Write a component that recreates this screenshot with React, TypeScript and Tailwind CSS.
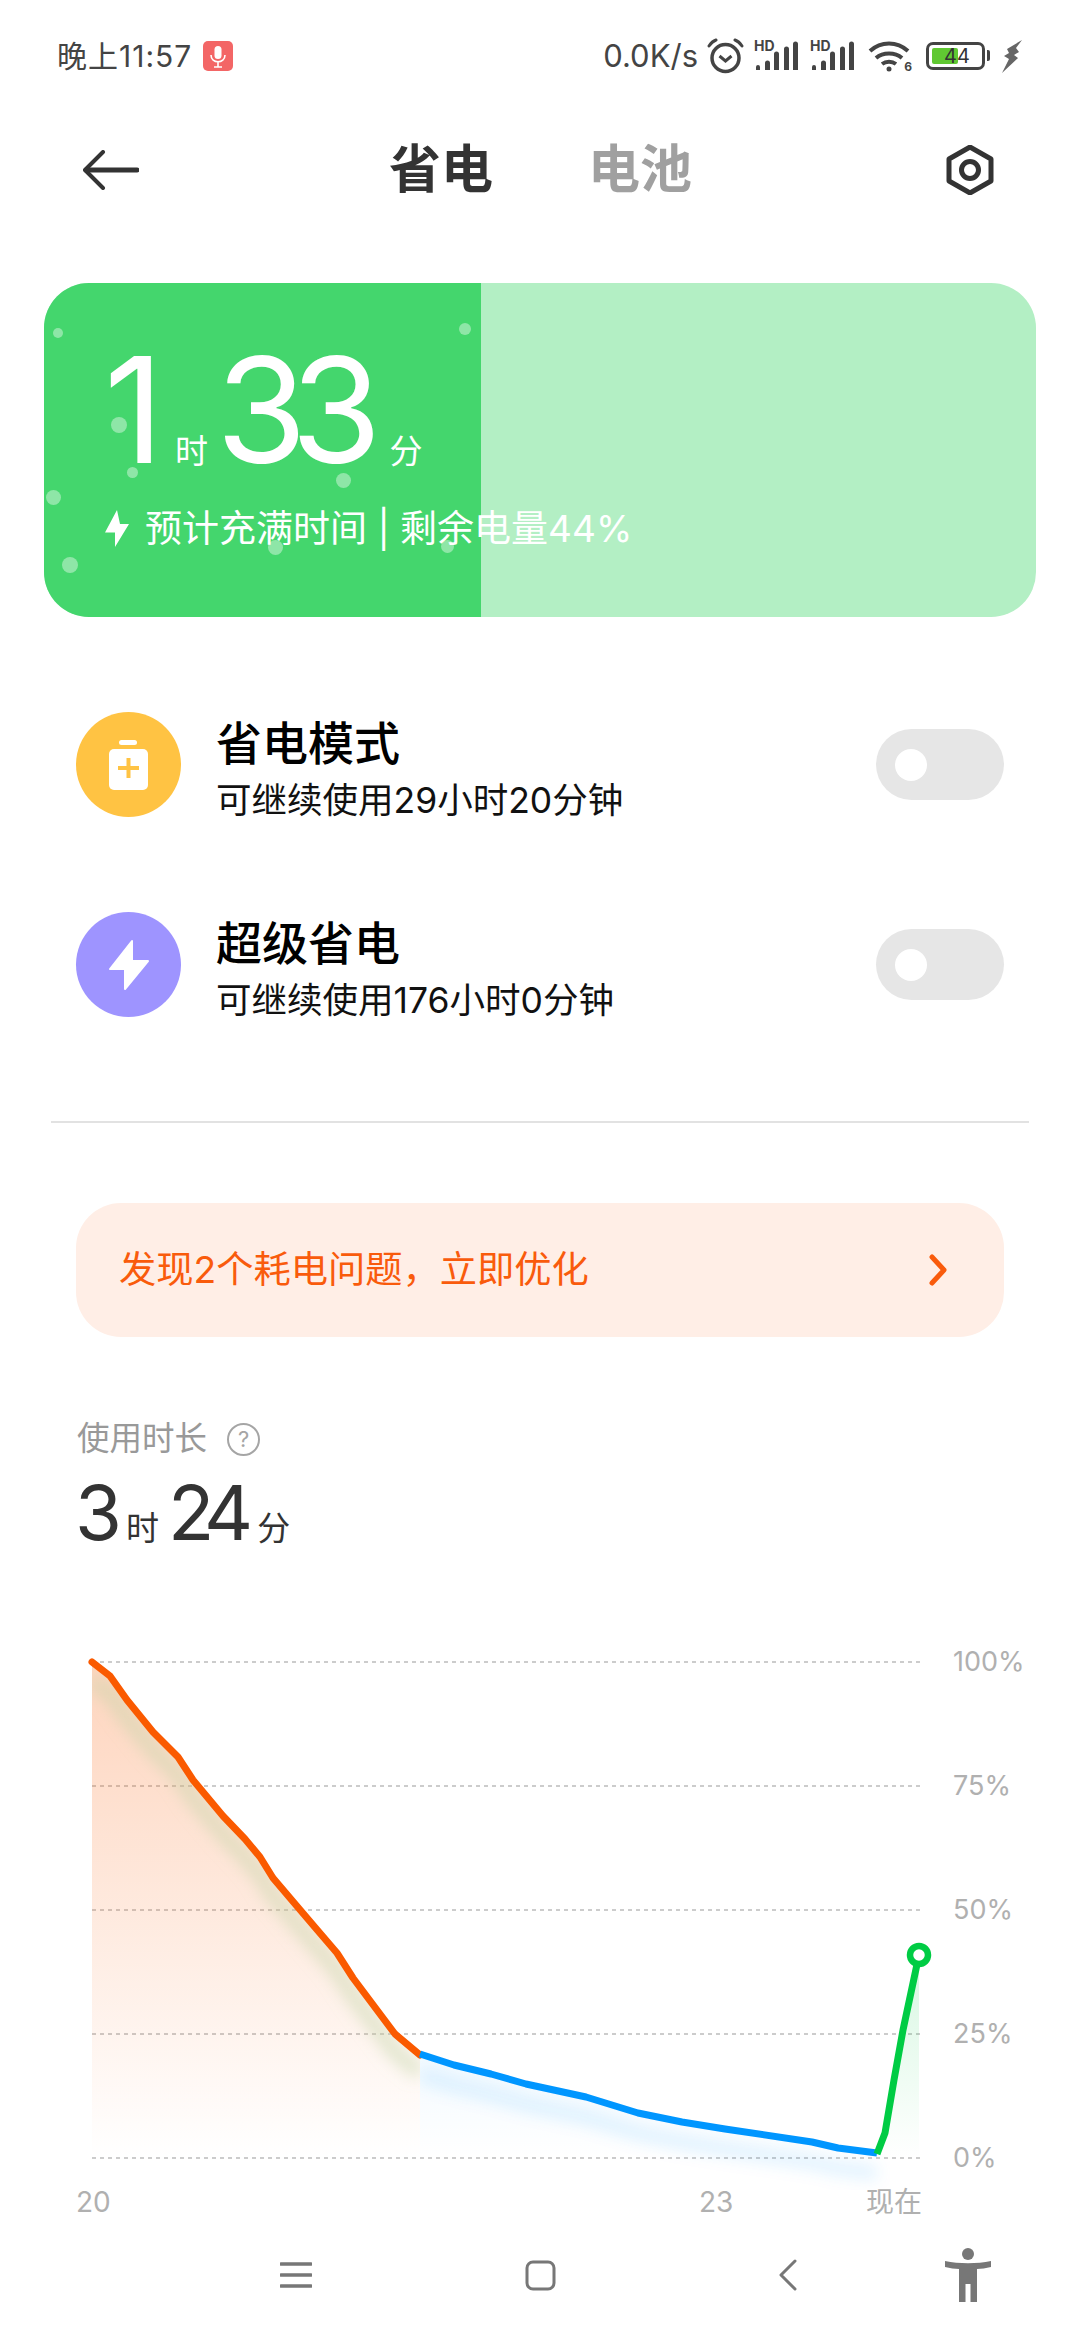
const orange =
  "92,1662 110,1676 127,1700 153,1732 178,1757 193,1780 223,1816 245,1839 260,1857 273,1878 290,1898 313,1925 337,1953 353,1978 395,2034 420,2055";
const blue =
  "420,2054 454,2065 491,2074 526,2084 586,2097 638,2113 682,2122 725,2129 812,2142 838,2148 877,2153";
const green = "877,2154 885,2133 894,2080 903,2030 919,1955";

const dots = [
  { c: "left-[9px] top-[45px] h-[10px] w-[10px]" },
  { c: "left-[415px] top-[40px] h-[12px] w-[12px]" },
  { c: "left-[67px] top-[134px] h-[16px] w-[16px]" },
  { c: "left-[83px] top-[184px] h-[11px] w-[11px]" },
  { c: "left-[292px] top-[190px] h-[15px] w-[15px]" },
  { c: "left-[2px] top-[207px] h-[15px] w-[15px]" },
  { c: "left-[224px] top-[257px] h-[15px] w-[15px]" },
  { c: "left-[397px] top-[257px] h-[13px] w-[13px]" },
  { c: "left-[18px] top-[274px] h-[16px] w-[16px]" },
];

function MicBadge() {
  return (
    <svg width="30" height="30" viewBox="0 0 30 30" className="ml-[11px]">
      <rect width="30" height="30" rx="5" fill="#f36666" />
      <rect x="11.500" y="5" width="7" height="13" rx="3.500" fill="#fff" />
      <path d="M8 14c0 9 14 9 14 0M15 20v6M11 26h8" fill="none" stroke="#fff" strokeWidth="1.600" />
    </svg>
  );
}

function Alarm() {
  return (
    <svg width="38" height="36" viewBox="0 0 38 36" className="ml-[9px]">
      <circle cx="18.500" cy="20" r="13.500" fill="none" stroke="#444" strokeWidth="3.500" />
      <path d="M12.500 18l6 5 6-5" fill="none" stroke="#444" strokeWidth="3" />
      <path d="M2 8C4 5 6 3 9 2M35 8c-2-3-4-5-7-6" fill="none" stroke="#444" strokeWidth="3" strokeLinecap="round" />
    </svg>
  );
}

function Signal({ className }: { className?: string }) {
  return (
    <div className={`relative h-[30px] w-[46px] ${className ?? ""}`}>
      <span className="absolute left-0 top-[-2px] text-[14px] font-bold leading-[14px] text-[#444]">HD</span>
      <svg width="46" height="30" viewBox="0 0 46 30">
        <path
          d="M2 29v-3a2 2 0 0 1 4 0v3zM11 29v-7a2 2 0 0 1 5 0v7zM20 29V13a2 2 0 0 1 5 0v16zM30 29V8a2 2 0 0 1 5 0v21zM39 29V3a2 2 0 0 1 5 0v26z"
          fill="#444"
        />
      </svg>
    </div>
  );
}

function Wifi() {
  return (
    <div className="relative ml-[12px] h-[32px] w-[44px]">
      <svg width="44" height="32" viewBox="0 0 44 32">
        <path d="M2 11c11-10 27-10 38 0M8 18c7-6 19-6 26 0M14 24c4-3 10-3 14 0" fill="none" stroke="#444" strokeWidth="4" />
        <circle cx="21" cy="29" r="2.500" fill="#444" />
      </svg>
      <span className="absolute right-0 top-[20px] text-[12px] font-bold leading-[13px] text-[#444]">6</span>
    </div>
  );
}

function Battery() {
  return (
    <div className="relative ml-[14px] flex h-[28px] w-[64px]">
      <div className="h-[28px] w-[59px] rounded-[7px] border-[3px] border-[#444] p-[3px]">
        <div className="h-full w-[26px] rounded-[2px] bg-[#60c832]" />
      </div>
      <div className="ml-[2px] mt-[8px] h-[11px] w-[3px] rounded-r-[2px] bg-[#444]" />
      <span className="absolute left-[18px] top-0 text-[20px] leading-[28px] text-[#333]">44</span>
    </div>
  );
}

function StatusBar() {
  return (
    <div className="flex h-[112px] items-center justify-between pl-[57px] pr-[58px] text-[#444]">
      <div className="flex items-center">
        <span className="text-[30px] leading-[40px] tracking-[1px]">晚上11:57</span>
        <MicBadge />
      </div>
      <div className="flex items-center">
        <span className="text-[31px] leading-[40px]">0.0K/s</span>
        <Alarm />
        <Signal className="ml-[9px]" />
        <Signal className="ml-[10px]" />
        <Wifi />
        <Battery />
        <svg width="20" height="33" viewBox="0 0 20 33" className="ml-[12px]">
          <path d="M20 0 5 9l2 4-5 3 5 3-7 14 16-15-4-3 5-3-3-4z" fill="#666" />
        </svg>
      </div>
    </div>
  );
}

function Header() {
  return (
    <div className="flex h-[116px] items-center justify-between pl-[83px] pr-[85px]">
      <svg width="56" height="40" viewBox="0 0 56 40">
        <path d="M20 2 2 20l18 18" fill="none" stroke="#333" strokeWidth="4" strokeLinecap="round" strokeLinejoin="round" />
        <path d="M3 20h51" fill="none" stroke="#333" strokeWidth="5" strokeLinecap="round" />
      </svg>
      <div className="mr-[3px] flex gap-[95px] text-[52px] font-bold leading-[60px]">
        <span className="text-[#333]">省电</span>
        <span className="text-[#a0a0a0]">电池</span>
      </div>
      <svg width="50" height="50" viewBox="0 0 50 50">
        <path d="M25 2 46 14v22L25 48 4 36V14z" fill="none" stroke="#333" strokeWidth="5" strokeLinejoin="round" />
        <circle cx="25" cy="25" r="8.500" fill="none" stroke="#333" strokeWidth="5" />
      </svg>
    </div>
  );
}

function HeroCard() {
  return (
    <div className="mx-[44px] mt-[55px] flex h-[334px] overflow-hidden rounded-[45px] bg-[#b3efc4]">
      <div className="relative h-full w-[437px] shrink-0 bg-[#44d66d] text-white">
        {dots.map((d, i) => (
          <div key={i} className={`absolute rounded-full bg-white/40 ${d.c}`} />
        ))}
        <div className="relative flex h-[150px] items-baseline whitespace-nowrap pl-[60px] pt-[52px]">
          <span className="w-[60px] text-[147px] font-normal leading-[150px] tracking-[-16px]">1</span>
          <span className="ml-[11px] text-[33px] leading-[40px]">时</span>
          <span className="ml-[8px] text-[147px] font-normal leading-[150px] tracking-[-16px]">33</span>
          <span className="ml-[24px] text-[33px] leading-[40px]">分</span>
        </div>
        <div className="relative mt-[72px] flex h-[48px] items-center whitespace-nowrap pl-[61px]">
          <svg width="24" height="38" viewBox="0 0 24 38" className="shrink-0">
            <path d="M12 0 0 22.500h10L10 37 24 14h-9z" fill="#fff" />
          </svg>
          <span className="ml-[16px] text-[37px] leading-[48px]">预计充满时间 | 剩余电量44%</span>
        </div>
      </div>
    </div>
  );
}

function Toggle() {
  return (
    <div className="flex h-[71px] w-[128px] items-center rounded-full bg-[#e6e6e6] pl-[19px]">
      <div className="h-[32px] w-[32px] rounded-full bg-white" />
    </div>
  );
}

function ModeRow({
  icon,
  color,
  title,
  sub,
  className,
}: {
  icon: React.ReactNode;
  color: string;
  title: string;
  sub: string;
  className?: string;
}) {
  return (
    <div className={`flex h-[105px] items-center pl-[76px] pr-[76px] ${className ?? ""}`}>
      <div className={`flex h-[105px] w-[105px] shrink-0 items-center justify-center rounded-full ${color}`}>{icon}</div>
      <div className="ml-[35px] flex-1 pt-[10px]">
        <div className="text-[46px] font-medium leading-[52px] text-black">{title}</div>
        <div className="mt-[10px] text-[35.500px] leading-[44px] text-[#111]">{sub}</div>
      </div>
      <Toggle />
    </div>
  );
}

function ChartLines() {
  const fillOrange = `${orange} 420,2158 92,2158`;
  const fillBlue = `${blue} 877,2158 420,2158`;
  const fillGreen = `${green} 919,2158 877,2158`;
  return (
    <svg width="840" height="540" viewBox="92 1640 840 540" className="overflow-visible">
      <defs>
        <linearGradient id="og" gradientUnits="userSpaceOnUse" x1="0" y1="1662" x2="0" y2="2158">
          <stop offset="0" stopColor="#fa5a00" stopOpacity="0.26" />
          <stop offset="1" stopColor="#fa5a00" stopOpacity="0" />
        </linearGradient>
        <linearGradient id="bg" gradientUnits="userSpaceOnUse" x1="0" y1="2054" x2="0" y2="2158">
          <stop offset="0" stopColor="#0096ff" stopOpacity="0.05" />
          <stop offset="1" stopColor="#0096ff" stopOpacity="0" />
        </linearGradient>
        <linearGradient id="gg" gradientUnits="userSpaceOnUse" x1="0" y1="1955" x2="0" y2="2158">
          <stop offset="0" stopColor="#00cc44" stopOpacity="0.16" />
          <stop offset="1" stopColor="#00cc44" stopOpacity="0" />
        </linearGradient>
        <filter id="soft" x="-10%" y="-30%" width="120%" height="160%">
          <feGaussianBlur stdDeviation="8" />
        </filter>
        <clipPath id="oc">
          <polygon points={fillOrange} />
        </clipPath>
        <clipPath id="bc">
          <rect x="420" y="2040" width="470" height="150" />
        </clipPath>
      </defs>
      {[1662, 1786, 1910, 2034, 2158].map((y) => (
        <line key={y} x1="92" x2="922" y1={y} y2={y} stroke="#bcbcbc" strokeWidth="1.500" strokeDasharray="4 4" />
      ))}
      <polygon points={fillOrange} fill="url(#og)" />
      <g clipPath="url(#oc)">
        <polyline points={orange} transform="translate(0 18)" fill="none" stroke="#c3d6a8" strokeOpacity="0.55" strokeWidth="14" filter="url(#soft)" />
      </g>
      <polygon points={fillBlue} fill="url(#bg)" />
      <g clipPath="url(#bc)">
        <polyline points={blue} transform="translate(0 20)" fill="none" stroke="#0096ff" strokeOpacity="0.12" strokeWidth="14" filter="url(#soft)" />
      </g>
      <polygon points={fillGreen} fill="url(#gg)" />
      <polyline points={orange} fill="none" stroke="#fa5a00" strokeWidth="7" strokeLinecap="round" strokeLinejoin="round" />
      <polyline points={blue} fill="none" stroke="#0096ff" strokeWidth="7" strokeLinejoin="round" />
      <polyline points={green} fill="none" stroke="#00cc44" strokeWidth="7" strokeLinejoin="round" />
      <circle cx="919" cy="1955" r="9" fill="#fff" stroke="#00cc44" strokeWidth="6.500" />
    </svg>
  );
}

function NavBar() {
  return (
    <div className="mt-[27px] flex h-[54px] items-center pl-[280px] text-[#777]">
      <svg width="32" height="28" viewBox="0 0 32 28">
        <path d="M1 3h30M1 14h30M1 25h30" stroke="#777" strokeWidth="3.500" strokeLinecap="round" />
      </svg>
      <svg width="31" height="31" viewBox="0 0 31 31" className="ml-[213px]">
        <rect x="2" y="2" width="27" height="27" rx="6" fill="none" stroke="#777" strokeWidth="3" />
      </svg>
      <svg width="18" height="32" viewBox="0 0 18 32" className="ml-[223px]">
        <path d="M16 2 2 16l14 14" fill="none" stroke="#777" strokeWidth="3" strokeLinecap="round" strokeLinejoin="round" />
      </svg>
      <svg width="48" height="54" viewBox="0 0 48 54" className="ml-[147px]">
        <circle cx="24" cy="6" r="6" fill="#777" />
        <path d="M1 13c14 3 32 3 46 0v6c-5 1-10 2-14 2v33h-6.500V36h-5v18H15V21c-4 0-9-1-14-2z" fill="#777" />
      </svg>
    </div>
  );
}

export default function App() {
  return (
    <div className="h-[2340px] w-[1080px] overflow-hidden bg-white [font-family:Inter,'Noto_Sans_CJK_SC',sans-serif]">
      <StatusBar />
      <Header />
      <HeroCard />

      <ModeRow
        className="mt-[95px]"
        color="bg-[#ffc343]"
        title="省电模式"
        sub="可继续使用29小时20分钟"
        icon={
          <svg width="39" height="50" viewBox="0 0 39 50">
            <rect x="10" y="0" width="18" height="5" rx="2.500" fill="#fff" />
            <rect x="0" y="9" width="39" height="41" rx="5" fill="#fff" />
            <path d="M19.500 18v20M9 28h21" stroke="#ffc343" strokeWidth="4" />
          </svg>
        }
      />
      <ModeRow
        className="mt-[95px]"
        color="bg-[#9e94ff]"
        title="超级省电"
        sub="可继续使用176小时0分钟"
        icon={
          <svg width="42" height="50" viewBox="0 0 42 50">
            <path d="M24 1 2 29h15v20L40 21H24z" fill="#fff" stroke="#fff" strokeWidth="2" strokeLinejoin="round" />
          </svg>
        }
      />

      <div className="mx-[51px] mt-[104px] h-[2px] bg-[#e2e2e2]" />

      <div className="mx-[76px] mt-[80px] flex h-[134px] items-center justify-between rounded-[45px] bg-[#ffeee6] pl-[43px] pr-[56px] text-[#f95b0c]">
        <span className="text-[37.250px] leading-[50px]">发现2个耗电问题，立即优化</span>
        <svg width="20" height="32" viewBox="0 0 20 32">
          <path d="M4 3l12 13L4 29" fill="none" stroke="#f95b0c" strokeWidth="5" strokeLinecap="round" strokeLinejoin="round" />
        </svg>
      </div>

      <div className="ml-[77px] mt-[84px] flex h-[36px] items-center">
        <span className="text-[32.500px] leading-[36px] text-[#999]">使用时长</span>
        <div className="ml-[20px] flex h-[33px] w-[33px] items-center justify-center rounded-full border-[2.500px] border-[#a5a5a5] text-[22px] leading-[26px] text-[#a5a5a5]">
          ?
        </div>
      </div>

      <div className="ml-[75px] mt-[13px] flex h-[85px] items-baseline text-[#333]">
        <span className="text-[76px] leading-[84px] tracking-[-9px]">3</span>
        <span className="ml-[13px] text-[33px] leading-[40px]">时</span>
        <span className="ml-[9px] text-[76px] leading-[84px] tracking-[-9px]">24</span>
        <span className="ml-[13px] text-[33px] leading-[40px]">分</span>
      </div>

      <div className="ml-[92px] mt-[85px] flex">
        <ChartLines />
        <div className="ml-[21px] mt-[2px] flex h-[536px] flex-col justify-between text-[27px] leading-[40px] text-[#b0b0b0]">
          <span>100%</span>
          <span>75%</span>
          <span>50%</span>
          <span>25%</span>
          <span>0%</span>
        </div>
      </div>

      <div className="ml-[76px] mt-[3px] flex h-[38px] text-[28px] leading-[38px] text-[#b0b0b0]">
        <span className="w-[32px]">20</span>
        <span className="ml-[591px] w-[32px]">23</span>
        <span className="ml-[135px]">现在</span>
      </div>

      <NavBar />
    </div>
  );
}
